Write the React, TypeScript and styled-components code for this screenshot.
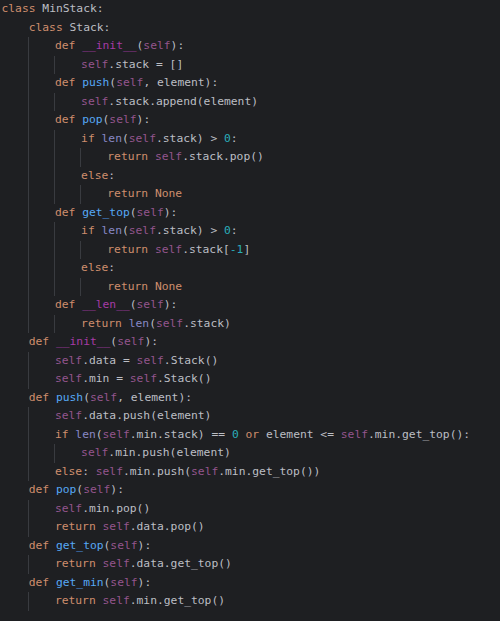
import React from "react";
import styled, { createGlobalStyle } from "styled-components";

const Global = createGlobalStyle`
  html, body { margin: 0; padding: 0; background: #1e1f22; }
  body { width: 500px; height: 621px; overflow: hidden; }
`;

const Editor = styled.div`
  box-sizing: border-box;
  width: 500px;
  height: 621px;
  background: #1e1f22;
  padding: 0 0 0 1.5px;
  font-family: "DejaVu Sans Mono", "Liberation Mono", monospace;
  font-size: 11.3px;
  line-height: 18.5px;
  color: #bcbec4;
  overflow: hidden;
`;

const Line = styled.div`
  display: flex;
  height: 18.5px;
  white-space: pre;
`;

const Indent = styled.span<{ $guide: boolean }>`
  display: inline-block;
  width: 4ch;
  height: 18.5px;
  box-sizing: border-box;
  border-left: 1px solid ${(p) => (p.$guide ? "#393b40" : "transparent")};
  margin-left: ${(p) => (p.$guide ? "-1px" : "0")};
  padding-left: ${(p) => (p.$guide ? "1px" : "0")};
`;

type Kind = "kw" | "self" | "fn" | "dunder" | "builtin" | "num" | "plain";

const colors: Record<Kind, string> = {
  kw: "#cf8e6d",
  self: "#94558d",
  fn: "#56a8f5",
  dunder: "#a63ba6",
  builtin: "#8888c6",
  num: "#2aacb8",
  plain: "#bcbec4",
};

const Tok = styled.span<{ $kind: Kind }>`
  color: ${(p) => colors[p.$kind]};
`;

const code = `class MinStack:
    class Stack:
        def __init__(self):
            self.stack = []
        def push(self, element):
            self.stack.append(element)
        def pop(self):
            if len(self.stack) > 0:
                return self.stack.pop()
            else:
                return None
        def get_top(self):
            if len(self.stack) > 0:
                return self.stack[-1]
            else:
                return None
        def __len__(self):
            return len(self.stack)
    def __init__(self):
        self.data = self.Stack()
        self.min = self.Stack()
    def push(self, element):
        self.data.push(element)
        if len(self.min.stack) == 0 or element <= self.min.get_top():
            self.min.push(element)
        else: self.min.push(self.min.get_top())
    def pop(self):
        self.min.pop()
        return self.data.pop()
    def get_top(self):
        return self.data.get_top()
    def get_min(self):
        return self.min.get_top()`;

const KW = new Set(["class", "def", "if", "else", "return", "or", "None"]);

function tokenize(text: string): { t: string; k: Kind }[] {
  const out: { t: string; k: Kind }[] = [];
  const re = /([A-Za-z_][A-Za-z0-9_]*)|(-?\d+)|(\s+)|(.)/g;
  let m: RegExpExecArray | null;
  let prevWord = "";
  while ((m = re.exec(text))) {
    if (m[1]) {
      const w = m[1];
      let k: Kind = "plain";
      if (KW.has(w)) k = "kw";
      else if (w === "self") k = "self";
      else if (/^__\w+__$/.test(w)) k = "dunder";
      else if (prevWord === "def") k = "fn";
      else if (w === "len") k = "builtin";
      out.push({ t: w, k });
      prevWord = w;
    } else if (m[2]) {
      out.push({ t: m[2], k: "num" });
      prevWord = "";
    } else {
      out.push({ t: m[0], k: "plain" });
      if (!m[3]) prevWord = "";
    }
  }
  return out;
}

function CodeLine({ text }: { text: string }) {
  const indent = text.match(/^ */)![0].length;
  const levels = Math.floor(indent / 4);
  const rest = text.slice(indent);
  return (
    <Line>
      {Array.from({ length: levels }).map((_, i) => (
        <Indent key={i} $guide={i > 0} />
      ))}
      <span>
        {tokenize(rest).map((tk, i) => (
          <Tok key={i} $kind={tk.k}>
            {tk.t}
          </Tok>
        ))}
      </span>
    </Line>
  );
}

export default function App() {
  return (
    <>
      <Global />
      <Editor>
        {code.split("\n").map((l, i) => (
          <CodeLine key={i} text={l} />
        ))}
      </Editor>
    </>
  );
}
